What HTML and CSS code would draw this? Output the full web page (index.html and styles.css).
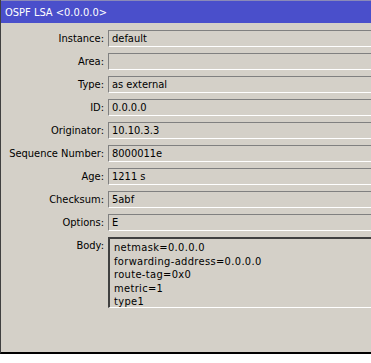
FILE: index.html
```html
<!DOCTYPE html>
<html lang="en">
<head>
    <meta charset="UTF-8">
    <title>OSPF LSA</title>
    <link rel="stylesheet" href="styles.css">
</head>
<body>
    <div class="window">
        <div class="title-bar">OSPF LSA &lt;0.0.0.0&gt;</div>
        <div class="form">
            <span class="label">Instance:</span>
            <div class="field">default</div>

            <span class="label">Area:</span>
            <div class="field"></div>

            <span class="label">Type:</span>
            <div class="field">as external</div>

            <span class="label">ID:</span>
            <div class="field">0.0.0.0</div>

            <span class="label">Originator:</span>
            <div class="field">10.10.3.3</div>

            <span class="label">Sequence Number:</span>
            <div class="field">8000011e</div>

            <span class="label">Age:</span>
            <div class="field">1211 s</div>

            <span class="label">Checksum:</span>
            <div class="field">5abf</div>

            <span class="label">Options:</span>
            <div class="field">E</div>

            <span class="label label-top">Body:</span>
            <div class="field body-field">netmask=0.0.0.0
forwarding-address=0.0.0.0
route-tag=0x0
metric=1
type1</div>
        </div>
    </div>
</body>
</html>
```

FILE: styles.css
```css
:root {
    --face: #d4d0c8;
    --shadow: #808080;
    --dark: #404040;
    --light: #ffffff;
    --title: #4a4fcb;
}

* {
    box-sizing: border-box;
    margin: 0;
    padding: 0;
}

body {
    background: #ffffff;
    overflow: hidden;
    font-family: 'DejaVu Sans Condensed', 'DejaVu Sans', sans-serif;
    font-size: 11px;
    color: #000;
}

.window {
    width: 371px;
    height: 354px;
    background: var(--face);
    border-left: 1px solid var(--dark);
    border-bottom: 2px solid #000;
    display: flex;
    flex-direction: column;
}

.title-bar {
    height: 23px;
    background: var(--title);
    border-top: 1px solid #8a8ab8;
    color: #fff;
    font-size: 11px;
    padding: 3px 0 0 4px;
    line-height: 17px;
}

/* Form rows */
.form {
    display: grid;
    grid-template-columns: 103px 1fr;
    column-gap: 4px;
    row-gap: 6px;
    padding-top: 7px;
    align-items: center;
}

.label {
    text-align: right;
    white-space: nowrap;
}
.label-top {
    align-self: start;
    padding-top: 2px;
}

.field {
    height: 17px;
    border-top: 1px solid var(--shadow);
    border-left: 1px solid var(--shadow);
    border-bottom: 1px solid var(--light);
    padding-left: 3px;
    line-height: 15px;
    white-space: nowrap;
}

.body-field {
    height: 71px;
    border-top: 2px solid var(--dark);
    border-left: 2px solid var(--dark);
    padding: 2px 0 0 4px;
    letter-spacing: 0.35px;
    line-height: 13.5px;
    white-space: pre;
}
```
